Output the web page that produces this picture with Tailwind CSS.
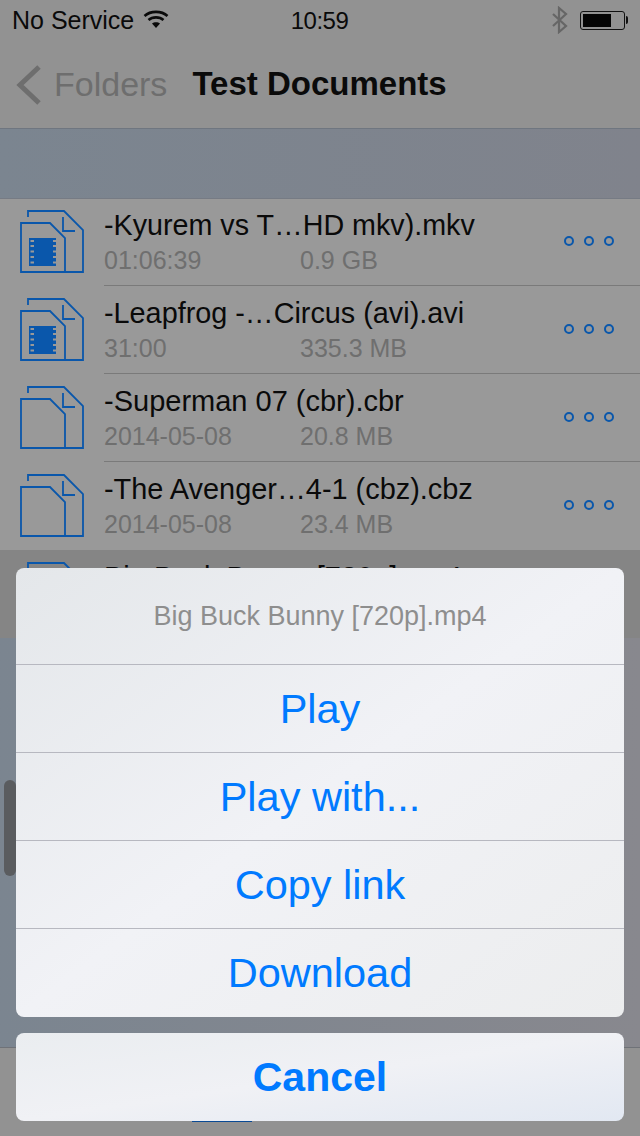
<!DOCTYPE html>
<html lang="en">
  <head>
    <meta charset="UTF-8" />
    <title>Test Documents</title>
    <script src="https://cdn.jsdelivr.net/npm/@tailwindcss/browser@4"></script>
  </head>
  <body class="bg-[#999999] font-['Liberation_Sans',sans-serif] overflow-hidden">
    <div class="relative w-[640px] h-[1136px] overflow-hidden bg-[#999999]">

      <!-- Status bar -->
      <div class="h-10 flex items-center justify-between bg-[#929292] pl-3 pr-3 pt-0.5 text-[25px] text-[#0a0a0a]">
        <div class="flex items-center gap-2.5 w-[200px]">
          <span class="whitespace-nowrap">No Service</span>
          <svg width="26" height="20" viewBox="0 0 26 20" fill="none" stroke="#0a0a0a" stroke-width="2.6" class="-ml-px -mt-1">
            <path d="M1.5 7 C7.5 1.5 18.5 1.5 24.5 7" />
            <path d="M5.5 11 C9.5 7.5 16.5 7.5 20.5 11" />
            <path d="M13 19 L9 14.5 C11 12.8 15 12.8 17 14.5 Z" fill="#0a0a0a" stroke="none" />
          </svg>
        </div>
        <span class="text-[24px] tracking-[-0.5px]">10:59</span>
        <div class="flex items-center justify-end gap-[11px] w-[201px] -mt-0.5">
          <svg width="18" height="28" viewBox="0 0 18 28" fill="none" stroke="#666666" stroke-width="2.2">
            <path d="M2 8 L15 20 L8 26 V2 L15 8 L2 20" />
          </svg>
          <div class="flex items-center">
            <div class="w-[45px] h-[19px] border border-[#111111] rounded-[3px] p-0.5">
              <div class="w-[28px] h-full bg-[#050505]"></div>
            </div>
            <div class="w-0.5 h-2 bg-[#111111] rounded-r-sm ml-px"></div>
          </div>
        </div>
      </div>

      <!-- Navigation bar -->
      <div class="h-[89px] flex items-center bg-[#929292] border-b border-[#6f7680] pl-4">
        <svg width="26" height="40" viewBox="0 0 26 40" fill="none" stroke="#6e6e6e" stroke-width="5" class="mt-0.5 -ml-px">
          <path d="M24 2 L5 20 L24 38" />
        </svg>
        <span class="ml-[13px] text-[34px] text-[#6e6e6e]">Folders</span>
        <span class="ml-[25px] text-[33px] font-bold text-[#0a0a0a]">Test Documents</span>
      </div>

      <!-- Search strip -->
      <div class="h-[70px] bg-gradient-to-r from-[#7b8590] to-[#80838c] border-b border-[#767b84]"></div>

      <!-- File list -->
      <div class="-mt-px">
        <div class="flex h-[88px]">
          <div class="w-[104px] flex-none pl-5 pt-3">
            <svg width="64" height="64" viewBox="0 0 64 64" fill="none" stroke="#0a57ab" stroke-width="1.8">
              <path d="M8 7 V1 H44 L63 20 V62 H45" />
              <path d="M43 7 V21 H55" />
              <path d="M1 13 H30 L45 28 V62 H1 Z" />
              <rect x="9" y="28" width="27" height="28" fill="#0a57ab" stroke="none" />
              <path d="M10.5 31 H36 M10.5 36 H36 M10.5 41.5 H36 M10.5 47 H36 M10.5 52.5 H36" stroke="#999999" stroke-width="2" stroke-dasharray="3.5 19" />
            </svg>
          </div>
          <div class="flex-1 relative border-b border-[#7a7a7a]">
            <div class="pt-[10px] text-[28.7px] leading-[34px] text-[#0a0a0a] whitespace-nowrap">-Kyurem vs T…HD mkv).mkv</div>
            <div class="flex mt-[3px] text-[25px] leading-[30px] text-[#6f6f6f]">
              <span class="w-[196px]">01:06:39</span><span>0.9 GB</span>
            </div>
            <div class="absolute right-[26px] top-[38px] flex gap-2.5">
              <span class="size-[10px] rounded-full border-[2.5px] border-[#0a57ab]"></span>
              <span class="size-[10px] rounded-full border-[2.5px] border-[#0a57ab]"></span>
              <span class="size-[10px] rounded-full border-[2.5px] border-[#0a57ab]"></span>
            </div>
          </div>
        </div>

        <div class="flex h-[88px]">
          <div class="w-[104px] flex-none pl-5 pt-3">
            <svg width="64" height="64" viewBox="0 0 64 64" fill="none" stroke="#0a57ab" stroke-width="1.8">
              <path d="M8 7 V1 H44 L63 20 V62 H45" />
              <path d="M43 7 V21 H55" />
              <path d="M1 13 H30 L45 28 V62 H1 Z" />
              <rect x="9" y="28" width="27" height="28" fill="#0a57ab" stroke="none" />
              <path d="M10.5 31 H36 M10.5 36 H36 M10.5 41.5 H36 M10.5 47 H36 M10.5 52.5 H36" stroke="#999999" stroke-width="2" stroke-dasharray="3.5 19" />
            </svg>
          </div>
          <div class="flex-1 relative border-b border-[#7a7a7a]">
            <div class="pt-[10px] text-[28.8px] leading-[34px] text-[#0a0a0a] whitespace-nowrap">-Leapfrog -…Circus (avi).avi</div>
            <div class="flex mt-[3px] text-[25px] leading-[30px] text-[#6f6f6f]">
              <span class="w-[196px]">31:00</span><span>335.3 MB</span>
            </div>
            <div class="absolute right-[26px] top-[38px] flex gap-2.5">
              <span class="size-[10px] rounded-full border-[2.5px] border-[#0a57ab]"></span>
              <span class="size-[10px] rounded-full border-[2.5px] border-[#0a57ab]"></span>
              <span class="size-[10px] rounded-full border-[2.5px] border-[#0a57ab]"></span>
            </div>
          </div>
        </div>

        <div class="flex h-[88px]">
          <div class="w-[104px] flex-none pl-5 pt-3">
            <svg width="64" height="64" viewBox="0 0 64 64" fill="none" stroke="#0a57ab" stroke-width="1.8">
              <path d="M8 7 V1 H44 L63 20 V62 H45" />
              <path d="M43 7 V21 H55" />
              <path d="M1 13 H30 L45 28 V62 H1 Z" />
            </svg>
          </div>
          <div class="flex-1 relative border-b border-[#7a7a7a]">
            <div class="pt-[10px] text-[29px] leading-[34px] text-[#0a0a0a] whitespace-nowrap">-Superman 07 (cbr).cbr</div>
            <div class="flex mt-[3px] text-[25px] leading-[30px] text-[#6f6f6f]">
              <span class="w-[196px]">2014-05-08</span><span>20.8 MB</span>
            </div>
            <div class="absolute right-[26px] top-[38px] flex gap-2.5">
              <span class="size-[10px] rounded-full border-[2.5px] border-[#0a57ab]"></span>
              <span class="size-[10px] rounded-full border-[2.5px] border-[#0a57ab]"></span>
              <span class="size-[10px] rounded-full border-[2.5px] border-[#0a57ab]"></span>
            </div>
          </div>
        </div>

        <div class="flex h-[88px]">
          <div class="w-[104px] flex-none pl-5 pt-3">
            <svg width="64" height="64" viewBox="0 0 64 64" fill="none" stroke="#0a57ab" stroke-width="1.8">
              <path d="M8 7 V1 H44 L63 20 V62 H45" />
              <path d="M43 7 V21 H55" />
              <path d="M1 13 H30 L45 28 V62 H1 Z" />
            </svg>
          </div>
          <div class="flex-1 relative">
            <div class="pt-[10px] text-[28.9px] leading-[34px] text-[#0a0a0a] whitespace-nowrap">-The Avenger…4-1 (cbz).cbz</div>
            <div class="flex mt-[3px] text-[25px] leading-[30px] text-[#6f6f6f]">
              <span class="w-[196px]">2014-05-08</span><span>23.4 MB</span>
            </div>
            <div class="absolute right-[26px] top-[38px] flex gap-2.5">
              <span class="size-[10px] rounded-full border-[2.5px] border-[#0a57ab]"></span>
              <span class="size-[10px] rounded-full border-[2.5px] border-[#0a57ab]"></span>
              <span class="size-[10px] rounded-full border-[2.5px] border-[#0a57ab]"></span>
            </div>
          </div>
        </div>

        <!-- Selected row, behind the sheet -->
        <div class="flex h-[88px] bg-[#858585]">
          <div class="w-[104px] flex-none pl-5 pt-3">
            <svg width="64" height="64" viewBox="0 0 64 64" fill="none" stroke="#0a57ab" stroke-width="1.8">
              <path d="M8 7 V1 H44 L63 20 V62 H45" />
            </svg>
          </div>
          <div class="flex-1 pt-[10px] text-[29px] leading-[34px] text-[#0a0a0a]">Big Buck Bunny [720p].mp4</div>
        </div>
      </div>

      <!-- Background below the list -->
      <div class="h-[410px] bg-gradient-to-r from-[#7b8590] to-[#88888e] border-b border-[#6f7278]"></div>
      <div class="h-[88px] bg-[#929292]"></div>

      <!-- Scroll indicator -->
      <div class="absolute left-1 top-[780px] w-3 h-24 rounded-md bg-[#5a5c5f]"></div>
      <!-- Tab indicator peeking out under the sheet -->
      <div class="absolute left-[192px] top-[1121px] w-[60px] h-px bg-[#0a4a94]"></div>

      <!-- Action sheet -->
      <div class="absolute left-4 right-4 top-[568px] flex flex-col gap-4">
        <div class="rounded-lg overflow-hidden bg-gradient-to-br from-[#e4e7ea] via-[#f1f2f6] to-[#ecedee] divide-y divide-[#b7b8c0]">
          <div class="h-[97px] flex items-center justify-center text-[27px] text-[#8e8e8e]">Big Buck Bunny [720p].mp4</div>
          <div class="h-[88px] flex items-center justify-center pt-px text-[41.5px] text-[#007aff]">Play</div>
          <div class="h-[88px] flex items-center justify-center pt-px text-[41.5px] text-[#007aff]">Play with...</div>
          <div class="h-[88px] flex items-center justify-center pt-px text-[41.5px] text-[#007aff]">Copy link</div>
          <div class="h-[88px] flex items-center justify-center pt-px text-[41.5px] text-[#007aff]">Download</div>
        </div>
        <div class="h-[88px] rounded-lg bg-gradient-to-br from-[#eaedf0] via-[#f0f1f5] to-[#e2e8f2] flex items-center justify-center pt-0.5 text-[41px] font-bold text-[#007aff]">Cancel</div>
      </div>
    </div>
  </body>
</html>
